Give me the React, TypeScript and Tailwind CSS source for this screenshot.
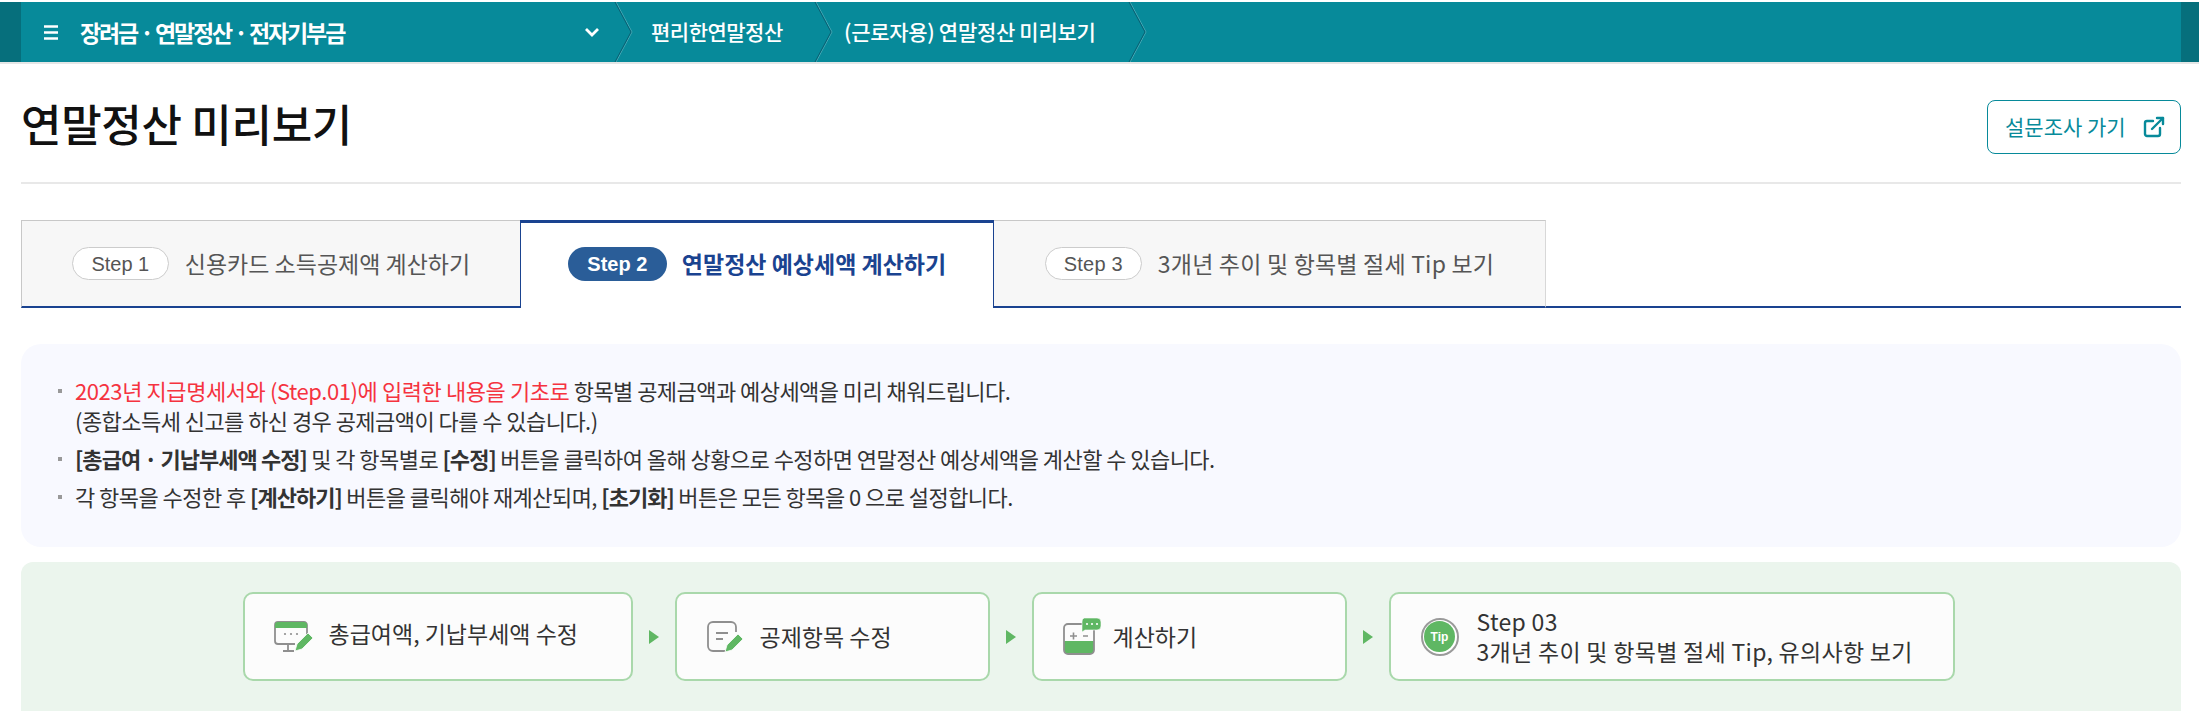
import { ExternalLink } from "lucide-react";

const KR = "font-['Noto_Sans_CJK_KR','Noto_Sans',sans-serif]";

function NavChevron() {
  return (
    <svg width="20" height="60" viewBox="0 0 20 60" fill="none" className="shrink-0">
      <path d="M1 0 L17 30 L1 60" stroke="#bfe3e8" strokeOpacity="0.35" strokeWidth="1" transform="translate(1 0)" />
      <path d="M1 0 L17 30 L1 60" stroke="#0a5f72" strokeWidth="1" />
    </svg>
  );
}

function StepTab({ step, label, active, className }: { step: string; label: string; active?: boolean; className: string }) {
  if (active) {
    return (
      <div className={`flex items-center justify-center gap-[15px] h-[88px] bg-white border-t-[3px] border-x border-t-[#1a4390] border-x-[#1a4390] pb-[4px] ${className}`}>
        <span className="flex items-center justify-center w-[99px] h-[34px] mt-[1px] rounded-full bg-[#2a5d98] text-white text-[20px] font-semibold font-['Liberation_Sans',sans-serif]">{step}</span>
        <span className="text-[23px] font-bold text-[#1a4390]">{label}</span>
      </div>
    );
  }
  return (
    <div className={`flex items-center justify-center gap-[16px] h-[88px] bg-[#f7f7f7] border-t border-t-[#c8c8c8] border-b-2 border-b-[#1a4390] ${className}`}>
      <span className="flex items-center justify-center w-[97px] h-[33px] rounded-full bg-white border border-[#cccccc] text-[#555555] text-[20px] font-['Liberation_Sans',sans-serif]">{step}</span>
      <span className="text-[23px] text-[#555555]">{label}</span>
    </div>
  );
}

function Bullet() {
  return <span className="absolute left-[-17px] top-[14px] w-[4px] h-[4px] bg-[#999999]" />;
}

function MonitorIcon() {
  return (
    <svg width="40" height="31" viewBox="0 0 40 31" fill="none" className="shrink-0">
      <path d="M33 14 V4 a3 3 0 0 0-3-3 H4 a3 3 0 0 0-3 3 V20 a3 3 0 0 0 3 3 H21" stroke="#8f8f8f" strokeWidth="1.8" />
      <path d="M1 7 V4 a3 3 0 0 1 3-3 H30 a3 3 0 0 1 3 3 V7 Z" fill="#5fb763" />
      <circle cx="11" cy="13" r="1.1" fill="#8f8f8f" />
      <circle cx="17" cy="13" r="1.1" fill="#8f8f8f" />
      <circle cx="23" cy="13" r="1.1" fill="#8f8f8f" />
      <path d="M14 23 V29 M9 30 H20" stroke="#8f8f8f" strokeWidth="1.8" />
      <path d="M21 30 L23 23 L34 12 L39 17 L28 28 Z" fill="#5fb763" stroke="#fcfcfc" strokeWidth="0.8" />
    </svg>
  );
}

function EditIcon() {
  return (
    <svg width="37" height="32" viewBox="0 0 37 32" fill="none" className="shrink-0">
      <path d="M18 30 H6 a5 5 0 0 1-5-5 V6 a5 5 0 0 1 5-5 H24 a5 5 0 0 1 5 5 V11" stroke="#8f8f8f" strokeWidth="1.8" />
      <path d="M9 12 H21 M9 18 H16" stroke="#8f8f8f" strokeWidth="1.8" />
      <path d="M18 31 L20 24 L31 13 L36 18 L25 29 Z" fill="#5fb763" stroke="#fcfcfc" strokeWidth="0.8" />
    </svg>
  );
}

function CalcIcon() {
  return (
    <svg width="38" height="37" viewBox="0 0 38 37" fill="none" className="shrink-0">
      <path d="M1 23 H31 V32 a4 4 0 0 1-4 4 H5 a4 4 0 0 1-4-4 Z" fill="#5fb763" />
      <rect x="1" y="6" width="30" height="30" rx="4" stroke="#8f8f8f" strokeWidth="1.8" />
      <path d="M7 18 H14 M10.5 14.5 V21.5 M20 18 H25" stroke="#8f8f8f" strokeWidth="1.6" />
      <path d="M21 0 H34 a4 4 0 0 1 4 4 V8 a4 4 0 0 1-4 4 H22 L19 14 V4 a4 4 0 0 1 2-4 Z" fill="#5fb763" stroke="#fcfcfc" strokeWidth="0.6" />
      <circle cx="24" cy="6" r="1.1" fill="#ffffff" />
      <circle cx="29" cy="6" r="1.1" fill="#ffffff" />
      <circle cx="34" cy="6" r="1.1" fill="#ffffff" />
    </svg>
  );
}

function TipIcon() {
  return (
    <span className="flex shrink-0 items-center justify-center w-[38px] h-[38px] rounded-full border-[2px] border-[#9a9a9a] bg-white">
      <span className="flex items-center justify-center w-[31px] h-[31px] rounded-full bg-[#5fb763] text-white text-[12px] font-bold font-['Liberation_Sans',sans-serif]">Tip</span>
    </span>
  );
}

function Arrow() {
  return <span className="w-0 h-0 mx-[16px] border-y-[7px] border-y-transparent border-l-[10px] border-l-[#5fb763]" />;
}

function FlowBox({ className, children }: { className: string; children: React.ReactNode }) {
  return (
    <div className={`flex items-center h-[89px] rounded-[10px] border-2 border-[#a9d8ab] bg-[#fcfcfc] text-[#333333] text-[23px] ${className}`}>
      {children}
    </div>
  );
}

export default function App() {
  return (
    <div className={`bg-white h-[720px] overflow-hidden ${KR}`}>
      {/* 상단 메뉴 */}
      <nav className="flex h-[60px] mt-[2px] bg-[#078a9a] text-white box-content border-b-2 border-[#e4e6e6]">
        <div className="w-[21px] bg-[#066f7c]" />
        <div className="flex flex-1 items-center">
          <div className="flex items-center w-[593px] pl-[23px] pr-[14px]">
            <svg width="14" height="15" viewBox="0 0 14 15" className="shrink-0">
              <path d="M0 1.5H14M0 7.5H14M0 13.5H14" stroke="#ffffff" strokeWidth="2.4" />
            </svg>
            <span className="ml-[22px] text-[23px] font-bold tracking-[-2.1px]">장려금 · 연말정산 · 전자기부금</span>
            <svg width="16" height="10" viewBox="0 0 16 10" className="ml-auto" fill="none">
              <path d="M2 2 L8 8 L14 2" stroke="#ffffff" strokeWidth="2.8" />
            </svg>
          </div>
          <NavChevron />
          <span className="ml-[17px] w-[163px] text-[21px] font-medium tracking-[-0.5px]">편리한연말정산</span>
          <NavChevron />
          <span className="ml-[10px] w-[284px] text-[21px] font-medium tracking-[-0.3px]">(근로자용) 연말정산 미리보기</span>
          <NavChevron />
        </div>
        <div className="w-[18px] bg-[#066f7c]" />
      </nav>

      <main className="pl-[21px] pr-[18px]">
        {/* 제목 */}
        <header className="flex items-center justify-between h-[120px] border-b-2 border-[#e8e8e8]">
          <h1 className="text-[44px] font-medium text-[#111111] tracking-[-0.3px]">연말정산 미리보기</h1>
          <a className="flex items-center justify-between w-[194px] h-[54px] pl-[17px] pr-[14px] rounded-[8px] border border-[#078a9a] text-[#078a9a] text-[21px] mt-[7px]">
            설문조사 가기
            <ExternalLink size={24} strokeWidth={2.4} />
          </a>
        </header>

        {/* 단계 탭 */}
        <div className="flex mt-[36px] border-b-2 border-[#1a4390] h-[88px]">
          <StepTab step="Step 1" label="신용카드 소득공제액 계산하기" className="w-[499px] border-l border-l-[#c8c8c8]" />
          <StepTab step="Step 2" label="연말정산 예상세액 계산하기" active className="w-[474px]" />
          <StepTab step="Step 3" label="3개년 추이 및 항목별 절세 Tip 보기" className="w-[552px] border-r border-r-[#d8d8d8] tracking-[0.2px]" />
        </div>

        {/* 안내 */}
        <ul className="mt-[36px] h-[203px] rounded-[20px] bg-[#f8f9ff] pl-[54px] pt-[31px] text-[22px] text-[#333333] tracking-[-0.55px]">
          <li className="relative leading-[30px]">
            <Bullet />
            <span className="text-[#f5333f] tracking-[-0.42px]">2023년 지급명세서와 (Step.01)에 입력한 내용을 기초로</span> 항목별 공제금액과 예상세액을 미리 채워드립니다.
            <br />
            (종합소득세 신고를 하신 경우 공제금액이 다를 수 있습니다.)
          </li>
          <li className="relative mt-[8px] leading-[30px]">
            <Bullet />
            <b className="font-bold tracking-[-0.95px]">[총급여 · 기납부세액 수정]</b> 및 각 항목별로 <b className="font-bold tracking-[-0.95px]">[수정]</b> 버튼을 클릭하여 올해 상황으로 수정하면 연말정산 예상세액을 계산할 수 있습니다.
          </li>
          <li className="relative mt-[8px] leading-[30px]">
            <Bullet />
            각 항목을 수정한 후 <b className="font-bold tracking-[-0.95px]">[계산하기]</b> 버튼을 클릭해야 재계산되며, <b className="font-bold tracking-[-0.95px]">[초기화]</b> 버튼은 모든 항목을 0 으로 설정합니다.
          </li>
        </ul>

        {/* 진행 순서 */}
        <div className="flex items-center justify-center mt-[15px] h-[149px] rounded-t-[12px] bg-[#ebf5ed] pb-[30px] pt-[30px] pr-[5px]">
          <FlowBox className="w-[390px] pl-[29px] gap-[15px]">
            <MonitorIcon />
            <span className="mt-[-6px]">총급여액, 기납부세액 수정</span>
          </FlowBox>
          <Arrow />
          <FlowBox className="w-[315px] pl-[30px] gap-[16px]">
            <EditIcon />
            <span>공제항목 수정</span>
          </FlowBox>
          <Arrow />
          <FlowBox className="w-[315px] pl-[29px] gap-[12px]">
            <CalcIcon />
            <span>계산하기</span>
          </FlowBox>
          <Arrow />
          <FlowBox className="w-[566px] pl-[30px] gap-[18px]">
            <TipIcon />
            <span className="leading-[30px] tracking-[0.3px] mt-[-2px]">
              Step 03
              <br />
              3개년 추이 및 항목별 절세 Tip, 유의사항 보기
            </span>
          </FlowBox>
        </div>
      </main>
    </div>
  );
}
